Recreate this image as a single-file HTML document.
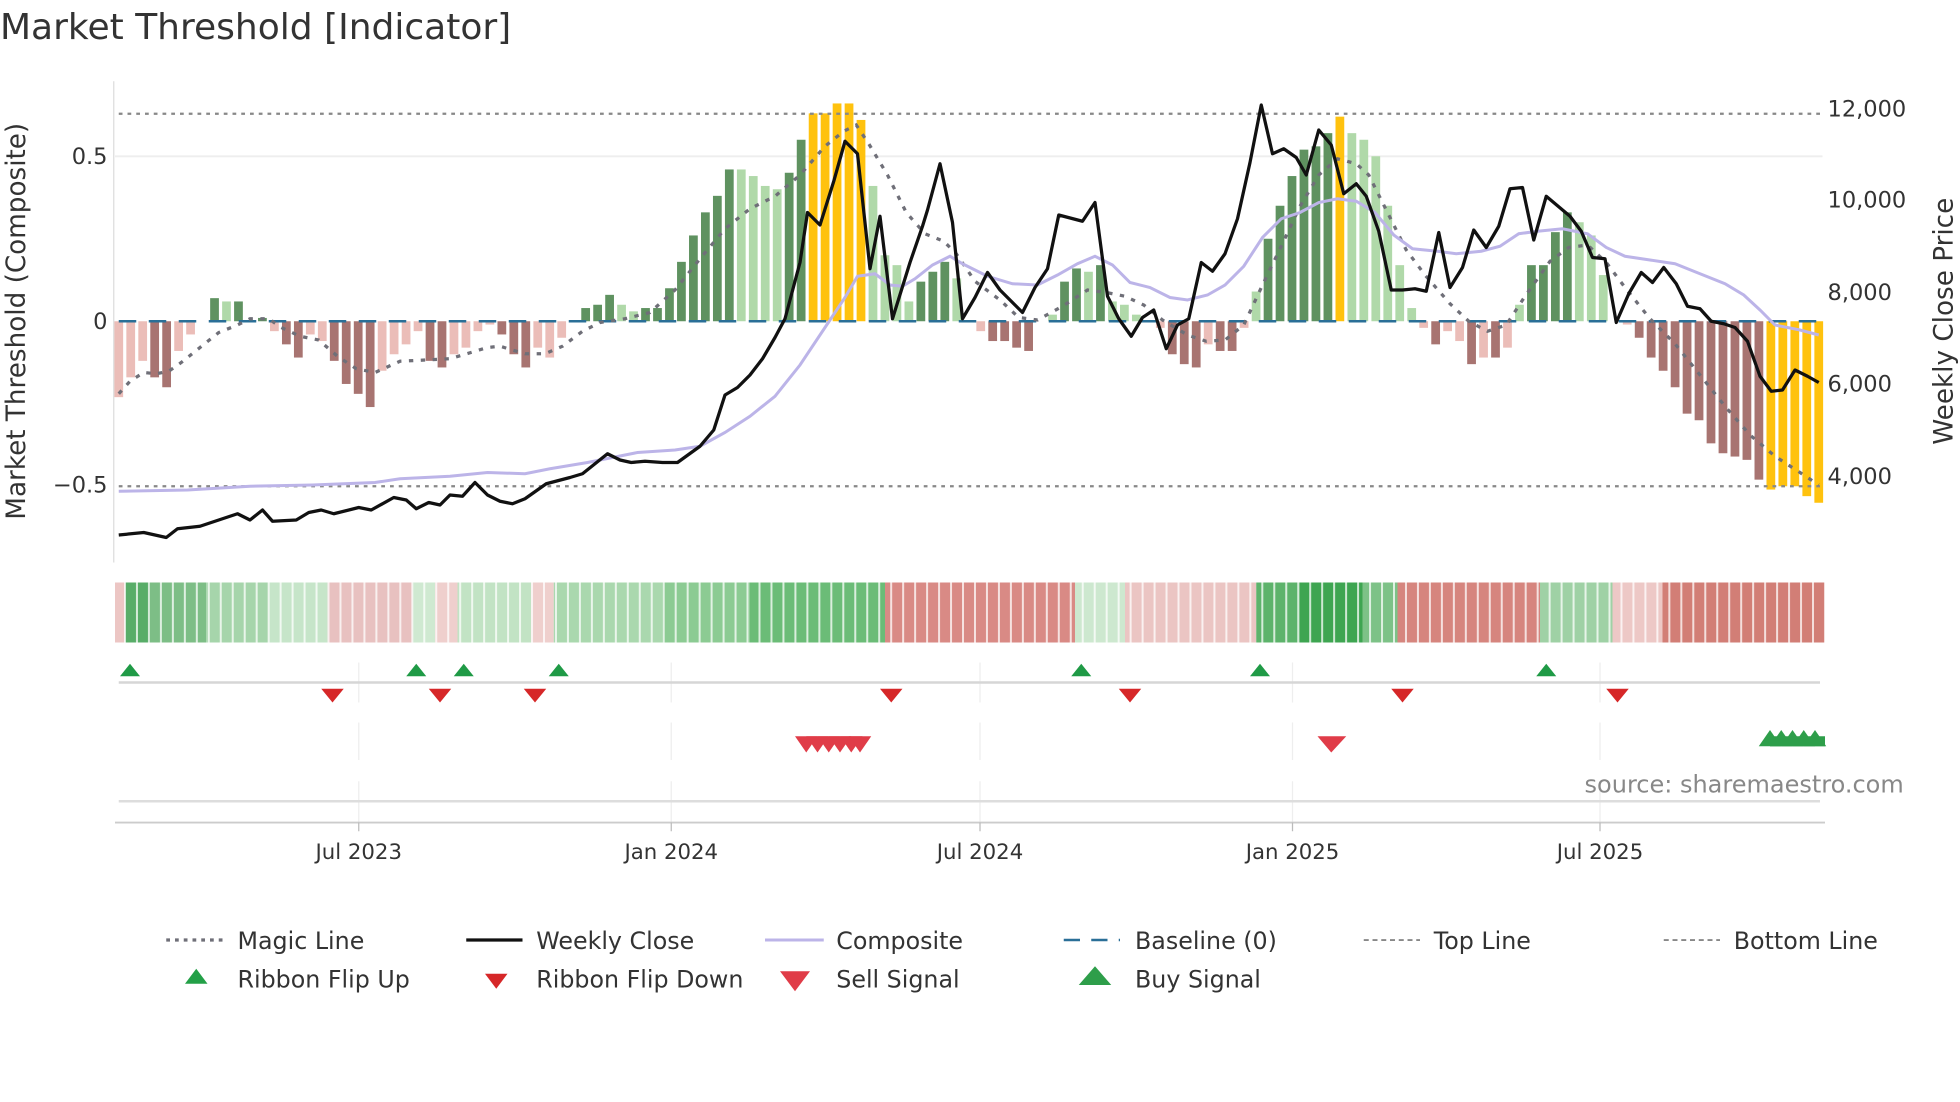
<!DOCTYPE html>
<html><head><meta charset="utf-8"><style>
html,body{margin:0;padding:0;background:#fff;}
svg{display:block;font-family:"DejaVu Sans","Liberation Sans",sans-serif;}
</style></head><body>
<svg id="s" width="1960" height="1102" viewBox="0 0 1568 881.6" xmlns="http://www.w3.org/2000/svg">
<rect width="1568" height="882" fill="#fff"/>
<text x="0" y="31" font-size="28.8" fill="#333">Market Threshold [Indicator]</text>
<line x1="91" y1="65" x2="91" y2="450" stroke="#ddd" stroke-width="1"/>
<line x1="92" y1="125" x2="1458" y2="125" stroke="#eee" stroke-width="1.5"/>
<g id="bars"></g>
<line x1="95" y1="257" x2="1458" y2="257" stroke="#2a6f97" stroke-width="2" stroke-dasharray="14,10"/>
<line x1="95" y1="91" x2="1458" y2="91" stroke="#888" stroke-width="1.8" stroke-dasharray="3,4"/>
<line x1="95" y1="389" x2="1458" y2="389" stroke="#888" stroke-width="1.8" stroke-dasharray="3,4"/>
<polyline id="mag" fill="none" stroke="#6f6f78" stroke-width="2.6" stroke-dasharray="3.5,6"/>
<polyline id="comp" fill="none" stroke="#bcb4e8" stroke-width="2.4"/>
<polyline id="blk" fill="none" stroke="#111" stroke-width="2.6" stroke-linejoin="round"/>
<g font-size="18" fill="#333">
<text x="86" y="131" text-anchor="end">0.5</text>
<text x="86" y="263" text-anchor="end">0</text>
<text x="86" y="394" text-anchor="end">−0.5</text>
<text x="1462" y="93">12,000</text>
<text x="1462" y="166">10,000</text>
<text x="1462" y="240">8,000</text>
<text x="1462" y="313">6,000</text>
<text x="1462" y="387">4,000</text>
</g>
<text transform="translate(20,257) rotate(-90)" text-anchor="middle" font-size="21" fill="#333">Market Threshold (Composite)</text>
<text transform="translate(1562,257) rotate(-90)" text-anchor="middle" font-size="21" fill="#333">Weekly Close Price</text>
<g id="rib"></g>
<g stroke="#eee" stroke-width="1">
<line x1="287" y1="530" x2="287" y2="562"/><line x1="537" y1="530" x2="537" y2="562"/><line x1="784" y1="530" x2="784" y2="562"/><line x1="1034" y1="530" x2="1034" y2="562"/><line x1="1280" y1="530" x2="1280" y2="562"/>
<line x1="287" y1="578" x2="287" y2="608"/><line x1="537" y1="578" x2="537" y2="608"/><line x1="784" y1="578" x2="784" y2="608"/><line x1="1034" y1="578" x2="1034" y2="608"/><line x1="1280" y1="578" x2="1280" y2="608"/>
<line x1="287" y1="625" x2="287" y2="658"/><line x1="537" y1="625" x2="537" y2="658"/><line x1="784" y1="625" x2="784" y2="658"/><line x1="1034" y1="625" x2="1034" y2="658"/><line x1="1280" y1="625" x2="1280" y2="658"/>
</g>
<line x1="95" y1="546" x2="1456" y2="546" stroke="#d6d6d6" stroke-width="2"/>
<line x1="95" y1="641" x2="1456" y2="641" stroke="#ddd" stroke-width="2"/>
<line x1="92" y1="658" x2="1460" y2="658" stroke="#ccc" stroke-width="1.5"/>
<g id="sig"></g>
<text x="1523" y="634" text-anchor="end" font-size="19.2" fill="#888">source: sharemaestro.com</text>
<g stroke="#bbb"><line x1="287" y1="658" x2="287" y2="665"/><line x1="537" y1="658" x2="537" y2="665"/><line x1="784" y1="658" x2="784" y2="665"/><line x1="1034" y1="658" x2="1034" y2="665"/><line x1="1280" y1="658" x2="1280" y2="665"/></g>
<g font-size="17" fill="#333" text-anchor="middle">
<text x="287" y="687">Jul 2023</text><text x="537" y="687">Jan 2024</text><text x="784" y="687">Jul 2024</text><text x="1034" y="687">Jan 2025</text><text x="1280" y="687">Jul 2025</text>
</g>
<g font-size="19" fill="#333">
<line x1="133" y1="752" x2="178" y2="752" stroke="#6f6f78" stroke-width="2.6" stroke-dasharray="3,4"/><text x="190" y="759">Magic Line</text>
<line x1="373" y1="752" x2="418" y2="752" stroke="#111" stroke-width="2.6"/><text x="429" y="759">Weekly Close</text>
<line x1="612" y1="752" x2="659" y2="752" stroke="#bcb4e8" stroke-width="2.4"/><text x="669" y="759">Composite</text>
<line x1="851" y1="752" x2="896" y2="752" stroke="#2a6f97" stroke-width="2" stroke-dasharray="13,9"/><text x="908" y="759">Baseline (0)</text>
<line x1="1091" y1="752" x2="1136" y2="752" stroke="#888" stroke-width="1.5" stroke-dasharray="4,3"/><text x="1147" y="759">Top Line</text>
<line x1="1331" y1="752" x2="1376" y2="752" stroke="#888" stroke-width="1.5" stroke-dasharray="4,3"/><text x="1387" y="759">Bottom Line</text>
<polygon points="148,787 166,787 157,775" fill="#23a047"/><text x="190" y="790">Ribbon Flip Up</text>
<polygon points="388,779 406,779 397,791" fill="#d62728"/><text x="429" y="790">Ribbon Flip Down</text>
<polygon points="624,777 648,777 636,793" fill="#e03c48"/><text x="669" y="790">Sell Signal</text>
<polygon points="863,788 889,788 876,773" fill="#2e9e4a"/><text x="908" y="790">Buy Signal</text>
</g>
</svg>
<script>
const NS="http://www.w3.org/2000/svg";
function el(p,t,a){const e=document.createElementNS(NS,t);for(const k in a)e.setAttribute(k,a[k]);p.appendChild(e);return e;}
const V=[[-.23,'l'],[-.17,'l'],[-.12,'l'],[-.17,'d'],[-.2,'d'],[-.09,'l'],[-.04,'l'],[0,'l'],[.07,'d'],[.06,'l'],[.06,'d'],[0,'l'],[.01,'d'],[-.03,'l'],[-.07,'d'],[-.11,'d'],[-.04,'l'],[-.06,'l'],[-.12,'d'],[-.19,'d'],[-.22,'d'],[-.26,'d'],[-.15,'l'],[-.1,'l'],[-.07,'l'],[-.03,'l'],[-.12,'d'],[-.14,'d'],[-.1,'l'],[-.08,'l'],[-.03,'l'],[-.01,'l'],[-.04,'d'],[-.1,'d'],[-.14,'d'],[-.08,'l'],[-.11,'l'],[-.05,'l'],[0,'l'],[.04,'d'],[.05,'d'],[.08,'d'],[.05,'l'],[.03,'l'],[.04,'d'],[.04,'d'],[.1,'d'],[.18,'d'],[.26,'d'],[.33,'d'],[.38,'d'],[.46,'d'],[.46,'l'],[.44,'l'],[.41,'l'],[.4,'l'],[.45,'d'],[.55,'d'],[.63,'y'],[.63,'y'],[.66,'y'],[.66,'y'],[.61,'y'],[.41,'l'],[.2,'l'],[.17,'l'],[.06,'l'],[.12,'d'],[.15,'d'],[.18,'d'],[.13,'l'],[0,'l'],[-.03,'l'],[-.06,'d'],[-.06,'d'],[-.08,'d'],[-.09,'d'],[0,'l'],[.02,'l'],[.12,'d'],[.16,'d'],[.15,'l'],[.17,'d'],[.06,'l'],[.05,'l'],[.02,'l'],[0,'l'],[-.02,'l'],[-.1,'d'],[-.13,'d'],[-.14,'d'],[-.07,'l'],[-.09,'d'],[-.09,'d'],[-.02,'l'],[.09,'l'],[.25,'d'],[.35,'d'],[.44,'d'],[.52,'d'],[.53,'d'],[.57,'d'],[.62,'y'],[.57,'l'],[.55,'l'],[.5,'l'],[.35,'l'],[.17,'l'],[.04,'l'],[-.02,'l'],[-.07,'d'],[-.03,'l'],[-.06,'l'],[-.13,'d'],[-.11,'l'],[-.11,'d'],[-.08,'l'],[.05,'l'],[.17,'d'],[.17,'d'],[.27,'d'],[.33,'d'],[.3,'l'],[.26,'l'],[.14,'l'],[0,'l'],[-.01,'l'],[-.05,'d'],[-.11,'d'],[-.15,'d'],[-.2,'d'],[-.28,'d'],[-.3,'d'],[-.37,'d'],[-.4,'d'],[-.41,'d'],[-.42,'d'],[-.48,'d'],[-.51,'y'],[-.5,'y'],[-.5,'y'],[-.53,'y'],[-.55,'y']];
const g=document.getElementById('bars');const n=V.length;const step=(1455-95)/(n-1);
V.forEach((v,i)=>{const x=95+i*step-3.5;const h=Math.abs(v[0])*264;if(h<0.5)return;
let c;if(v[1]=='y')c='#ffc20e';else if(v[0]>0)c=v[1]=='d'?'#5f9260':'#b0d9a9';else c=v[1]=='d'?'#a87471':'#ebbdb8';
el(g,'rect',{x:x,y:v[0]>0?257-h:257,width:7,height:h,fill:c});});
function pl(id,s){document.getElementById(id).setAttribute('points',s);}
pl('blk',"95,428 115,426 133,430 142,423 160,421 190,411 200,416 210,408 218,417 237,416 247,410 257,408 267,411 287,406 297,408 315,398 325,400 333,407 343,402 352,404 360,396 370,397 380,386 390,396 400,401 410,403 420,399 437,387 456,382 466,379 476,371 486,363 496,368 505,370 516,369 530,370 542,370 560,357 571,344 580,316 590,310 600,300 610,287 620,270 628,255 640,210 646,170 656,180 667,145 676,113 686,123 696,215 704,173 714,255 728,210 738,181 742,168 752,131 762,178 770,255 780,238 790,218 800,232 810,242 818,250 828,230 838,215 847,172 866,177 876,162 886,237 895,255 905,269 914,254 923,248 933,279 942,260 951,255 961,210 970,217 980,203 990,175 1000,130 1009,84 1018,123 1027,119 1037,126 1045,140 1055,104 1065,116 1075,155 1085,147 1093,157 1103,185 1113,232 1122,232 1132,231 1141,233 1151,186 1160,230 1170,214 1179,184 1189,198 1199,181 1208,151 1218,150 1227,192 1237,157 1256,173 1265,185 1274,206 1284,207 1293,258 1303,235 1313,218 1322,226 1331,214 1341,227 1350,245 1360,247 1369,257 1379,259 1388,262 1398,273 1408,301 1417,313 1426,312 1436,296 1446,301 1455,306");
pl('comp',"95,393 150,392 200,389 250,388 300,386 320,383 360,381 390,378 420,379 440,375 470,370 490,366 510,362 540,360 560,357 580,346 600,333 620,317 640,292 660,262 676,238 686,221 700,219 712,228 722,229 732,223 746,212 760,205 770,211 790,221 810,227 830,228 846,220 862,211 876,205 890,212 904,226 920,230 936,238 950,240 966,236 980,228 995,213 1010,190 1025,175 1040,170 1055,162 1070,159 1085,161 1100,170 1115,188 1130,199 1150,201 1165,203 1185,201 1200,197 1215,187 1230,185 1250,183 1270,187 1285,198 1300,205 1320,208 1340,211 1360,219 1380,227 1395,236 1408,248 1420,260 1440,264 1455,268");
pl('mag',"95,315 104,305 115,298 125,299 135,297 145,290 160,278 175,266 190,260 200,255 215,255 225,262 240,269 255,272 270,285 285,295 300,298 320,289 340,288 360,287 380,281 390,278 400,277 420,283 436,283 450,277 466,265 480,258 500,255 520,250 540,232 560,207 580,183 600,167 620,157 640,140 660,117 675,105 685,100 695,115 710,140 725,170 740,187 755,193 765,203 780,225 800,240 815,254 830,256 850,245 870,232 885,234 900,237 915,244 930,256 950,268 965,273 980,272 995,260 1010,228 1025,197 1040,165 1055,140 1070,127 1085,131 1095,140 1110,170 1125,200 1140,220 1160,243 1175,257 1190,265 1205,260 1220,237 1240,209 1255,198 1270,196 1285,210 1300,230 1320,255 1340,275 1360,300 1380,325 1400,348 1420,365 1440,378 1455,388");
const R=[[92,100,'#ecc6c4'],[100,120,'#58ad68'],[120,165,'#7dbe86'],[165,215,'#a6d5ab'],[215,262,'#c6e5c9'],[262,330,'#e8c1c0'],[330,348,'#cfe9d1'],[348,366,'#efcfcd'],[366,425,'#c2e3c4'],[425,443,'#efcfcd'],[443,530,'#aad8ae'],[530,600,'#8ccb93'],[600,708,'#6bbc77'],[708,860,'#d98a85'],[860,900,'#cde8cf'],[900,1005,'#ebc5c3'],[1005,1040,'#5db36b'],[1040,1090,'#3ea551'],[1090,1118,'#7dc287'],[1118,1232,'#d6857e'],[1232,1290,'#9fd1a5'],[1290,1330,'#edc8c6'],[1330,1460,'#d27e76']];
const rg=document.getElementById('rib');
R.forEach(r=>el(rg,'rect',{x:r[0],y:466,width:r[1]-r[0],height:48,fill:r[2]}));
for(let x=95+step/2;x<1460;x+=step)el(rg,'rect',{x:x-0.6,y:466,width:1.6,height:48,fill:'#fff',opacity:0.75});
const sg=document.getElementById('sig');
[104,333,371,447,865,1008,1237].forEach(x=>el(sg,'polygon',{points:`${x-8},541 ${x+8},541 ${x},531`,fill:'#1f9a46'}));
[266,352,428,713,904,1122,1294].forEach(x=>el(sg,'polygon',{points:`${x-9},551 ${x+9},551 ${x},562`,fill:'#d62728'}));
[645,654,663,672,681,688].forEach(x=>el(sg,'polygon',{points:`${x-9},589 ${x+9},589 ${x},602`,fill:'#e03c48'}));
el(sg,'polygon',{points:"1054,589 1077,589 1065,602",fill:'#e03c48'});
[1416,1425,1434,1443,1452].forEach(x=>el(sg,'polygon',{points:`${x-9},597 ${x+9},597 ${x},584`,fill:'#2e9e4a'}));
el(sg,'rect',{x:1416,y:589,width:44,height:8,fill:'#2e9e4a'});
</script>
</body></html>
